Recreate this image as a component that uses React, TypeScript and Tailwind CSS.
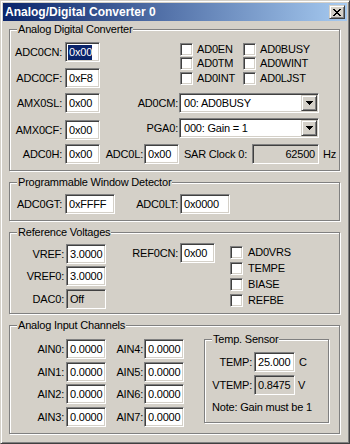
import React from "react";

const sunken =
  "border border-t-[#808080] border-l-[#808080] border-r-white border-b-white shadow-[inset_1px_1px_0_#404040,inset_-1px_-1px_0_#d4d0c8]";
const raised =
  "border border-t-[#d4d0c8] border-l-[#d4d0c8] border-r-[#404040] border-b-[#404040] shadow-[inset_1px_1px_0_#ffffff,inset_-1px_-1px_0_#808080]";

function Label({ w, children }: { w: string; children: React.ReactNode }) {
  return <div className={`${w} shrink-0 text-right whitespace-nowrap`}>{children}</div>;
}

function Edit({
  cls,
  text,
  disabled = false,
  sel = false,
  right = false,
}: {
  cls: string;
  text: string;
  disabled?: boolean;
  sel?: boolean;
  right?: boolean;
}) {
  return (
    <div
      className={`${cls} h-[20px] shrink-0 ${sunken} ${disabled ? "bg-[#d4d0c8]" : "bg-white"} flex items-center overflow-hidden whitespace-nowrap ${
        right ? "justify-end pr-[3px]" : "pl-[2px]"
      }`}
    >
      {sel ? (
        <span className="bg-[#0a246a] text-white leading-[15px] pl-[1px]">{text}</span>
      ) : (
        <span className={right ? "" : "pl-[1px]"}>{text}</span>
      )}
    </div>
  );
}

function Combo({ cls, text }: { cls: string; text: string }) {
  return (
    <div className={`${cls} h-[20px] shrink-0 ${sunken} bg-white p-[1px] flex items-center`}>
      <span className="flex-1 pl-[3px] whitespace-nowrap">{text}</span>
      <div className={`w-[16px] h-[16px] shrink-0 ${raised} bg-[#d4d0c8] flex items-center justify-center`}>
        <svg width="7" height="4" viewBox="0 0 7 4" shapeRendering="crispEdges">
          <path d="M0 0h7v1H0zM1 1h5v1H1zM2 2h3v1H2zM3 3h1v1H3z" fill="#000" />
        </svg>
      </div>
    </div>
  );
}

function Check({ label, gap, cls = "" }: { label: string; gap: string; cls?: string }) {
  return (
    <div className={`flex items-center h-[13px] ${cls}`}>
      <div className={`w-[13px] h-[13px] shrink-0 bg-white ${sunken}`} />
      <span className={`${gap} whitespace-nowrap`}>{label}</span>
    </div>
  );
}

function Group({ title, cls, children }: { title: string; cls: string; children?: React.ReactNode }) {
  return (
    <div className={`relative shrink-0 border border-[#808080] shadow-[inset_1px_1px_0_#ffffff,1px_1px_0_#ffffff] ${cls}`}>
      <span className="absolute left-[7px] -top-[7px] px-[1px] bg-[#d4d0c8] leading-[13px] whitespace-nowrap">
        {title}
      </span>
      {children}
    </div>
  );
}

export default function App() {
  return (
    <div
      className={`w-[350px] h-[444px] bg-[#d4d0c8] border border-t-[#d4d0c8] border-l-[#d4d0c8] border-r-[#404040] border-b-[#404040] shadow-[inset_1px_1px_0_#ffffff,inset_-1px_-1px_0_#808080] p-[2px] font-['Liberation_Sans',Arial,sans-serif] text-[11px] tracking-[-0.2px] leading-[13px] text-black flex flex-col overflow-hidden`}
    >
      {/* Title bar */}
      <div className="h-[18px] w-[344px] shrink-0 bg-[linear-gradient(to_right,#0a246a,#a6caf0)] flex items-center justify-between pl-[2px] pr-[2px]">
        <span className="text-white font-bold text-[12px] tracking-normal leading-[14px] whitespace-nowrap">
          Analog/Digital Converter 0
        </span>
        <div className={`w-[16px] h-[14px] ${raised} bg-[#d4d0c8] flex items-center justify-center`}>
          <svg width="8" height="7" viewBox="0 0 8 7" shapeRendering="crispEdges">
            <path
              d="M0 0h2v1H0zM6 0h2v1H6zM1 1h2v1H1zM5 1h2v1H5zM2 2h4v1H2zM3 3h2v1H3zM2 4h4v1H2zM1 5h2v1H1zM5 5h2v1H5zM0 6h2v1H0zM6 6h2v1H6z"
              fill="#000"
            />
          </svg>
        </div>
      </div>

      {/* Analog Digital Converter */}
      <Group title="Analog Digital Converter" cls="mt-[8px] ml-[6px] w-[331px] h-[142px]">
        <div className="flex items-start">
          <div className="flex flex-col">
            <div className="mt-[12px] flex items-center h-[20px]">
              <Label w="w-[52px]">ADC0CN:</Label>
              <Edit cls="ml-[3px] w-[35px]" text="0x00" sel />
            </div>
            <div className="mt-[6px] flex items-center h-[20px]">
              <Label w="w-[52px]">ADC0CF:</Label>
              <Edit cls="ml-[3px] w-[35px]" text="0xF8" />
            </div>
          </div>
          <div className="ml-[80px] mt-[13px] flex">
            <div className="w-[63px] flex flex-col">
              <Check label="AD0EN" gap="ml-[4px]" />
              <Check label="AD0TM" gap="ml-[4px]" cls="mt-[1px]" />
              <Check label="AD0INT" gap="ml-[4px]" cls="mt-[2px]" />
            </div>
            <div className="flex flex-col">
              <Check label="AD0BUSY" gap="ml-[4px]" />
              <Check label="AD0WINT" gap="ml-[4px]" cls="mt-[1px]" />
              <Check label="AD0LJST" gap="ml-[4px]" cls="mt-[2px]" />
            </div>
          </div>
        </div>

        <div className="mt-[5px] flex items-center h-[20px]">
          <Label w="w-[52px]">AMX0SL:</Label>
          <Edit cls="ml-[3px] w-[35px]" text="0x00" />
          <Label w="w-[78px]">AD0CM:</Label>
          <Combo cls="ml-[1px] w-[140px]" text="00: AD0BUSY" />
        </div>

        <div className="mt-[5px] flex items-start h-[22px]">
          <div className="mt-[2px] flex items-center h-[20px]">
            <Label w="w-[52px]">AMX0CF:</Label>
            <Edit cls="ml-[3px] w-[35px]" text="0x00" />
          </div>
          <div className="flex items-center h-[20px]">
            <Label w="w-[78px]">PGA0:</Label>
            <Combo cls="ml-[1px] w-[140px]" text="000: Gain = 1" />
          </div>
        </div>

        <div className="mt-[4px] flex items-center h-[20px]">
          <Label w="w-[52px]">ADC0H:</Label>
          <Edit cls="ml-[3px] w-[35px]" text="0x00" />
          <Label w="w-[43px]">ADC0L:</Label>
          <Edit cls="ml-[1px] w-[35px]" text="0x00" />
          <Label w="w-[68px]">SAR Clock 0:</Label>
          <Edit cls="ml-[5px] w-[67px]" text="62500" disabled right />
          <span className="ml-[4px]">Hz</span>
        </div>
      </Group>

      {/* Programmable Window Detector */}
      <Group title="Programmable Window Detector" cls="mt-[11px] ml-[6px] w-[331px] h-[39px]">
        <div className="mt-[11px] flex items-center h-[20px]">
          <Label w="w-[52px]">ADC0GT:</Label>
          <Edit cls="ml-[3px] w-[50px]" text="0xFFFF" />
          <Label w="w-[63px]">ADC0LT:</Label>
          <Edit cls="ml-[2px] w-[50px]" text="0x0000" />
        </div>
      </Group>

      {/* Reference Voltages */}
      <Group title="Reference Voltages" cls="mt-[11px] ml-[6px] w-[331px] h-[82px]">
        <div className="flex items-start">
          <div className="flex flex-col">
            <div className="mt-[11px] flex items-center h-[20px]">
              <Label w="w-[54px]">VREF:</Label>
              <Edit cls="ml-[2px] w-[40px]" text="3.0000" />
            </div>
            <div className="mt-[2px] flex items-center h-[20px]">
              <Label w="w-[54px]">VREF0:</Label>
              <Edit cls="ml-[2px] w-[40px]" text="3.0000" />
            </div>
            <div className="mt-[3px] flex items-center h-[20px]">
              <Label w="w-[54px]">DAC0:</Label>
              <Edit cls="ml-[2px] w-[40px]" text="Off" disabled />
            </div>
          </div>
          <div className="mt-[10px] flex items-center h-[20px]">
            <Label w="w-[72px]">REF0CN:</Label>
            <Edit cls="ml-[2px] w-[35px]" text="0x00" />
          </div>
          <div className="ml-[15px] mt-[13px] flex flex-col">
            <Check label="AD0VRS" gap="ml-[5px]" />
            <Check label="TEMPE" gap="ml-[5px]" cls="mt-[3px]" />
            <Check label="BIASE" gap="ml-[5px]" cls="mt-[3px]" />
            <Check label="REFBE" gap="ml-[5px]" cls="mt-[3px]" />
          </div>
        </div>
      </Group>

      {/* Analog Input Channels */}
      <Group title="Analog Input Channels" cls="mt-[11px] ml-[6px] w-[331px] h-[109px]">
        <div className="flex items-start">
          <div className="flex flex-col">
            <div className="mt-[13px] flex items-center h-[20px]">
              <Label w="w-[54px]">AIN0:</Label>
              <Edit cls="ml-[2px] w-[40px]" text="0.0000" />
            </div>
            <div className="mt-[3px] flex items-center h-[20px]">
              <Label w="w-[54px]">AIN1:</Label>
              <Edit cls="ml-[2px] w-[40px]" text="0.0000" />
            </div>
            <div className="mt-[2px] flex items-center h-[20px]">
              <Label w="w-[54px]">AIN2:</Label>
              <Edit cls="ml-[2px] w-[40px]" text="0.0000" />
            </div>
            <div className="mt-[3px] flex items-center h-[20px]">
              <Label w="w-[54px]">AIN3:</Label>
              <Edit cls="ml-[2px] w-[40px]" text="0.0000" />
            </div>
          </div>
          <div className="flex flex-col">
            <div className="mt-[13px] flex items-center h-[20px]">
              <Label w="w-[37px]">AIN4:</Label>
              <Edit cls="ml-[1px] w-[40px]" text="0.0000" />
            </div>
            <div className="mt-[3px] flex items-center h-[20px]">
              <Label w="w-[37px]">AIN5:</Label>
              <Edit cls="ml-[1px] w-[40px]" text="0.0000" />
            </div>
            <div className="mt-[2px] flex items-center h-[20px]">
              <Label w="w-[37px]">AIN6:</Label>
              <Edit cls="ml-[1px] w-[40px]" text="0.0000" />
            </div>
            <div className="mt-[3px] flex items-center h-[20px]">
              <Label w="w-[37px]">AIN7:</Label>
              <Edit cls="ml-[1px] w-[40px]" text="0.0000" />
            </div>
          </div>
          <Group title="Temp. Sensor" cls="ml-[20px] mt-[13px] w-[125px] h-[84px]">
            <div className="mt-[12px] flex items-center h-[20px]">
              <Label w="w-[47px]">TEMP:</Label>
              <Edit cls="ml-[2px] w-[41px]" text="25.000" />
              <span className="ml-[4px]">C</span>
            </div>
            <div className="mt-[3px] flex items-center h-[20px]">
              <Label w="w-[47px]">VTEMP:</Label>
              <Edit cls="ml-[2px] w-[41px]" text="0.8475" disabled />
              <span className="ml-[3px]">V</span>
            </div>
            <div className="mt-[6px] ml-[7px] whitespace-nowrap">Note: Gain must be 1</div>
          </Group>
        </div>
      </Group>
    </div>
  );
}
